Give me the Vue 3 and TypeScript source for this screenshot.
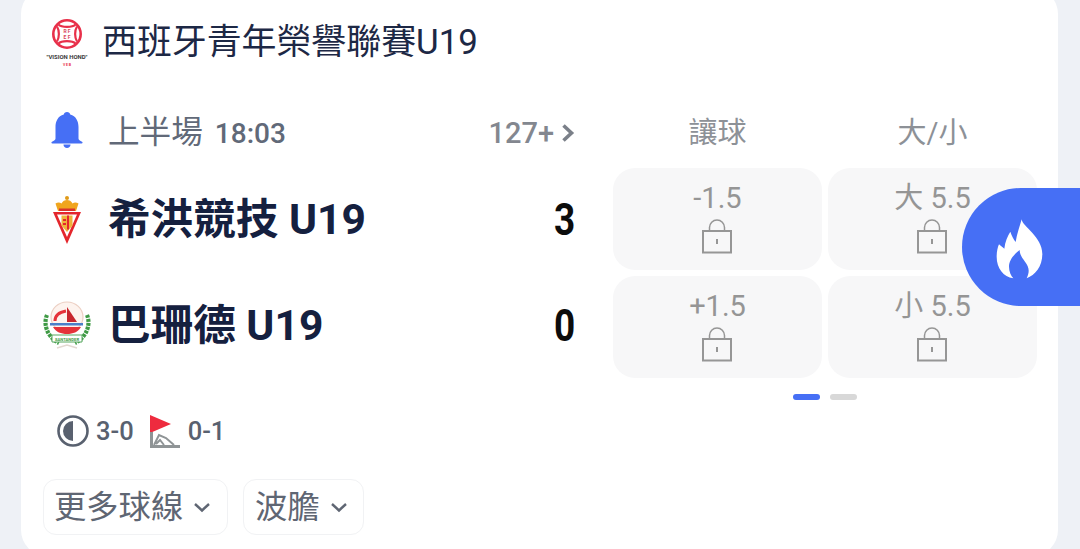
<script setup lang="ts">
interface Cell { label: string }
const cells: Cell[] = [{ label: '-1.5' }, { label: '大 5.5' }, { label: '+1.5' }, { label: '小 5.5' }]
</script>

<template>
  <div class="page">
    <div class="card">
      <header class="league">
        <svg class="league-logo" viewBox="0 0 48 48" width="48" height="48">
          <circle cx="24" cy="15" r="13.700" fill="none" stroke="#e8304a" stroke-width="2.600" />
          <path d="M15.500 5.500c3 3.200 14 3.200 17 0M15.500 24.500c3-3.200 14-3.200 17 0M14 7.500c2.500 4 2.500 11 0 15M34 7.500c-2.500 4-2.500 11 0 15" fill="none" stroke="#e8304a" stroke-width="2.200" />
          <text x="24" y="13.500" class="rfef">R F</text>
          <text x="24" y="20" class="rfef">E F</text>
          <text x="24" y="40" class="vision" textLength="41" lengthAdjust="spacingAndGlyphs">"VISION HOND"</text>
          <text x="24" y="47" class="veb">V E B</text>
        </svg>
        <span class="league-name">西班牙青年榮譽聯賽U19</span>
      </header>

      <section class="match">
        <div class="left">
          <div class="status">
            <svg class="bell" viewBox="0 0 32 38" width="32" height="38">
              <path fill="#466ff5" d="M16 1c1.800 0 3 1 3.200 2.400C25 5 27.500 10 27.500 16v11.500c0 1.400 1.500 2.500 3.500 3.200 1 .4.700 1.800-.4 1.800H1.400c-1.100 0-1.400-1.400-.4-1.800 2-.7 3.500-1.800 3.500-3.200V16c0-6 2.500-11 8.300-12.600C13 2 14.200 1 16 1z" />
              <path fill="#466ff5" d="M12.500 33.500h7c0 2-1.500 3.500-3.500 3.500s-3.500-1.500-3.500-3.500z" />
            </svg>
            <span class="period">上半場<b>18:03</b></span>
            <span class="more">127+</span>
            <svg class="more-arrow" viewBox="0 0 14 20" width="14" height="20">
              <path d="M2.500 2.500 10.500 10l-8 7.500" fill="none" stroke="#7b8089" stroke-width="3.600" />
            </svg>
          </div>

          <div class="team team-one">
            <span class="crest">
              <svg viewBox="0 0 30 50" width="30" height="50">
                <path fill="#f0a51e" d="M5 17 2.500 9.500c2-1.500 4.500-1.500 6 0C9.500 7 12 6 14 6s4.500 1 5.500 3.500c1.500-1.500 4-1.500 6 0L23 17z" />
                <circle cx="14" cy="4" r="2" fill="#e09a18" />
                <path fill="#d9322b" d="M6 14.500h16v2.500H6z" />
                <path fill="#e4262c" d="M0 18h28L14 50z" />
                <path fill="#fff" d="M4 20.500h20L14 43z" />
                <path fill="#f0b23a" d="M8.500 21.500h11v10L14 38l-5.500-6.500z" />
                <path fill="#e4262c" d="M14 21.500h2v14h-2zM10 25h3v2h-3zM10 29h3v2h-3z" />
              </svg>
            </span>
            <span class="team-name">希洪競技 U19</span>
            <span class="score">3</span>
          </div>

          <div class="team team-two">
            <span class="crest">
              <svg viewBox="0 0 50 50" width="50" height="50">
                <ellipse cx="24" cy="17" rx="16" ry="15" fill="#fdf3ee" stroke="#eccfc3" stroke-width="1.200" />
                <path d="M4 15c-4 9 0 22 12 28M44 15c4 9 0 22-12 28" fill="none" stroke="#3f9a45" stroke-width="4.200" stroke-dasharray="3 1" />
                <path fill="none" stroke="#e5323a" stroke-width="3" d="M12 21c0-6 5-9 11-10" />
                <path fill="#c8262e" d="M24 7l10 15H24z" />
                <path fill="#4a7fc9" d="M7 23h33v2.500H7z" />
                <path fill="#e5323a" d="M10 27h28c-3 5-8 7-14 7s-11-2-14-7z" />
                <path fill="#fff" stroke="#59a860" stroke-width="1" d="M9 35h30v7H9z" />
                <text x="24" y="40.500" class="santander">SANTANDER</text>
                <path d="M14 48l10-3 10 3" fill="none" stroke="#e3d9d2" stroke-width="1.500" />
              </svg>
            </span>
            <span class="team-name">巴珊德 U19</span>
            <span class="score">0</span>
          </div>

          <div class="stats">
            <svg viewBox="0 0 32 32" width="32" height="32">
              <circle cx="16" cy="16" r="14.500" fill="none" stroke="#59616f" stroke-width="2.600" />
              <path fill="#59616f" d="M16 6a10 10 0 0 0 0 20z" />
            </svg>
            <span class="stat-text">3-0</span>
            <svg class="corner" viewBox="0 0 30 33" width="30" height="33">
              <path fill="#ee2b3e" d="M0 0l21 9L0 18z" />
              <path fill="#8f9496" d="M0 17h3v16H0zM0 30h30v3H0z" />
              <path fill="none" stroke="#8f9496" stroke-width="2" d="M4 30l5-10 7 3 8 7M6 29l4-4 4 5" />
            </svg>
            <span class="stat-text second">0-1</span>
          </div>

          <div class="buttons">
            <button class="pill pill-wide">
              更多球線
              <svg viewBox="0 0 18 11" width="18" height="11"><path d="M2 2l7 6.500L16 2" fill="none" stroke="#5f6673" stroke-width="2.400" /></svg>
            </button>
            <button class="pill pill-narrow">
              波膽
              <svg viewBox="0 0 18 11" width="18" height="11"><path d="M2 2l7 6.500L16 2" fill="none" stroke="#5f6673" stroke-width="2.400" /></svg>
            </button>
          </div>
        </div>

        <div class="odds">
          <div class="odds-head">
            <span>讓球</span>
            <span>大/小</span>
          </div>
          <div class="grid">
            <div v-for="c in cells" :key="c.label" class="cell">
              <span class="cell-label">{{ c.label }}</span>
              <svg viewBox="0 0 30 36" width="30" height="36">
                <path d="M7.500 13V9.500a7.500 7.500 0 0 1 15 0V13" fill="none" stroke="#969696" stroke-width="1.500" />
                <rect x="1" y="13" width="28" height="21.500" fill="none" stroke="#969696" stroke-width="2" />
                <path d="M15 21v5" stroke="#969696" stroke-width="2" />
              </svg>
            </div>
          </div>
          <div class="dots">
            <i class="dot on"></i>
            <i class="dot"></i>
          </div>
        </div>
      </section>
    </div>

    <div class="fab">
      <svg viewBox="0 0 210 225" width="70" height="75">
        <path fill="#fff" d="M110 28C112 50 172 80 172 132C172 170 150 195 125 205C135 185 132 170 120 155C110 142 104 132 104 120C88 132 72 150 72 170C72 185 78 197 85 205C55 200 35 175 35 140C35 125 38 112 42 103C48 108 52 112 58 116C60 95 68 78 76 65C80 78 86 88 92 96C96 70 104 50 110 28Z" />
      </svg>
    </div>
  </div>
</template>

<style>
html, body { margin: 0; background: #eef1f6; overflow: hidden; }
</style>

<style scoped>
.page {
  position: relative;
  width: 1080px;
  height: 549px;
  padding: 0 22px 0 21px;
  box-sizing: border-box;
  overflow: hidden;
  font-family: Roboto, "Noto Sans CJK TC", sans-serif;
}
.card {
  height: 568px;
  margin-top: -12px;
  background: #fff;
  border-radius: 26px;
  padding: 12px 0 0 22px;
  box-sizing: border-box;
}
.league {
  display: flex;
  align-items: center;
  height: 86px;
}
.league-logo { display: block; flex: none; }
.league-name {
  margin-left: 11px;
  font-size: 34.900px;
  color: #1d2845;
  line-height: 60px;
  white-space: nowrap;
}
.rfef { font: 700 5px Roboto, sans-serif; fill: #d8475c; text-anchor: middle; }
.vision { font: 700 5.500px Roboto, sans-serif; fill: #3a3a3a; text-anchor: middle; }
.veb { font: 700 3.500px Roboto, sans-serif; fill: #e8304a; text-anchor: middle; }
.santander { font: 700 4.200px Roboto, sans-serif; fill: #3f9a45; text-anchor: middle; }
.match { display: flex; }
.left { width: 532px; flex: none; }
.status {
  display: flex;
  align-items: center;
  height: 60px;
  margin-top: 17px;
  padding-left: 8px;
  color: #616978;
  line-height: 60px;
}
.bell { flex: none; margin-bottom: 6px; }
.period { margin-left: 25px; font-size: 31.600px; white-space: nowrap; }
.period b { font-weight: 500; font-size: 28px; margin-left: 12px; }
.more { margin-left: auto; font-size: 29px; font-weight: 500; color: #83878f; }
.more-arrow { margin-left: 7px; }
.team { display: flex; align-items: center; height: 106px; }
.team-one { margin-top: 3px; }
.crest { width: 50px; display: flex; justify-content: center; flex: none; }
.team-name {
  margin-left: 15px;
  font-size: 42.600px;
  font-weight: 700;
  color: #15203f;
  line-height: 106px;
  white-space: nowrap;
}
.score {
  margin-left: auto;
  padding-top: 2px;
  font-size: 44px;
  font-weight: 700;
  line-height: 106px;
  color: #0c0c0c;
  transform: scaleX(.84);
  transform-origin: 100% 50%;
}
.stats {
  display: flex;
  align-items: center;
  height: 40px;
  margin-top: 33px;
  padding-left: 14px;
  color: #59616f;
  font-size: 25.500px;
  font-weight: 500;
  line-height: 40px;
}
.stat-text { margin-left: 7px; }
.corner { margin-left: 16px; }
.stat-text.second { margin-left: 8px; }
.buttons { display: flex; gap: 15px; margin-top: 28px; }
.pill {
  display: flex;
  align-items: center;
  gap: 10px;
  height: 56px;
  box-sizing: border-box;
  padding: 0 0 0 10px;
  border: 1px solid #f1f2f4;
  border-radius: 13px;
  background: #fff;
  color: #5f6673;
  font: 400 32.300px/54px Roboto, "Noto Sans CJK TC", sans-serif;
}
.pill-wide { width: 185px; }
.pill-narrow { width: 121px; padding-left: 11px; }
.odds { margin-left: 38px; width: 424px; }
.odds-head {
  display: grid;
  grid-template-columns: 209px 209px;
  column-gap: 6px;
  height: 60px;
  margin-top: 17px;
  align-items: center;
  text-align: center;
  font-size: 29px;
  line-height: 60px;
  color: #8d9197;
}
.grid {
  display: grid;
  grid-template-columns: 209px 209px;
  grid-auto-rows: 102px;
  gap: 6px;
  margin-top: 5px;
}
.cell {
  display: flex;
  flex-direction: column;
  align-items: center;
  border-radius: 22px;
  background: #f7f7f8;
  color: #959595;
  font-size: 29px;
  padding-top: 13px;
  box-sizing: border-box;
}
.cell-label { line-height: 34px; }
.cell svg { margin-top: 3px; margin-right: 1px; }
.dots { display: flex; justify-content: center; gap: 10px; margin-top: 16px; }
.dot { width: 27px; height: 6px; border-radius: 3px; background: #d8d8d8; }
.dot.on { background: #466ff5; }
.fab {
  position: absolute;
  right: 0;
  top: 188px;
  width: 118px;
  height: 118px;
  padding-right: 2px;
  box-sizing: border-box;
  background: #466ff5;
  border-radius: 59px 0 0 59px;
  display: flex;
  align-items: center;
  justify-content: center;
}
</style>
